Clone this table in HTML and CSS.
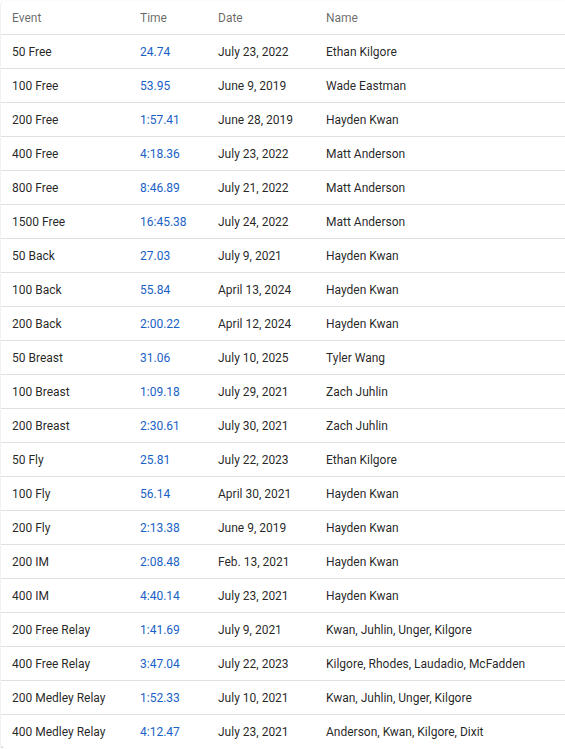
FILE: index.html
```html
<!DOCTYPE html>
<html>
<head>
<meta charset="utf-8">
<link rel="stylesheet" href="styles.css">
</head>
<body>
<div class="card">
<table class="records">
<thead>
<tr><th class="c-event">Event</th><th class="c-time">Time</th><th class="c-date">Date</th><th class="c-name">Name</th></tr>
</thead>
<tbody>
<tr><td>50 Free</td><td class="time">24.74</td><td>July 23, 2022</td><td>Ethan Kilgore</td></tr>
<tr><td>100 Free</td><td class="time">53.95</td><td>June 9, 2019</td><td>Wade Eastman</td></tr>
<tr><td>200 Free</td><td class="time">1:57.41</td><td>June 28, 2019</td><td>Hayden Kwan</td></tr>
<tr><td>400 Free</td><td class="time">4:18.36</td><td>July 23, 2022</td><td>Matt Anderson</td></tr>
<tr><td>800 Free</td><td class="time">8:46.89</td><td>July 21, 2022</td><td>Matt Anderson</td></tr>
<tr><td>1500 Free</td><td class="time">16:45.38</td><td>July 24, 2022</td><td>Matt Anderson</td></tr>
<tr><td>50 Back</td><td class="time">27.03</td><td>July 9, 2021</td><td>Hayden Kwan</td></tr>
<tr><td>100 Back</td><td class="time">55.84</td><td>April 13, 2024</td><td>Hayden Kwan</td></tr>
<tr><td>200 Back</td><td class="time">2:00.22</td><td>April 12, 2024</td><td>Hayden Kwan</td></tr>
<tr><td>50 Breast</td><td class="time">31.06</td><td>July 10, 2025</td><td>Tyler Wang</td></tr>
<tr><td>100 Breast</td><td class="time">1:09.18</td><td>July 29, 2021</td><td>Zach Juhlin</td></tr>
<tr><td>200 Breast</td><td class="time">2:30.61</td><td>July 30, 2021</td><td>Zach Juhlin</td></tr>
<tr><td>50 Fly</td><td class="time">25.81</td><td>July 22, 2023</td><td>Ethan Kilgore</td></tr>
<tr><td>100 Fly</td><td class="time">56.14</td><td>April 30, 2021</td><td>Hayden Kwan</td></tr>
<tr><td>200 Fly</td><td class="time">2:13.38</td><td>June 9, 2019</td><td>Hayden Kwan</td></tr>
<tr><td>200 IM</td><td class="time">2:08.48</td><td>Feb. 13, 2021</td><td>Hayden Kwan</td></tr>
<tr><td>400 IM</td><td class="time">4:40.14</td><td>July 23, 2021</td><td>Hayden Kwan</td></tr>
<tr><td>200 Free Relay</td><td class="time">1:41.69</td><td>July 9, 2021</td><td>Kwan, Juhlin, Unger, Kilgore</td></tr>
<tr><td>400 Free Relay</td><td class="time">3:47.04</td><td>July 22, 2023</td><td>Kilgore, Rhodes, Laudadio, McFadden</td></tr>
<tr><td>200 Medley Relay</td><td class="time">1:52.33</td><td>July 10, 2021</td><td>Kwan, Juhlin, Unger, Kilgore</td></tr>
<tr><td>400 Medley Relay</td><td class="time">4:12.47</td><td>July 23, 2021</td><td>Anderson, Kwan, Kilgore, Dixit</td></tr>
</tbody>
</table>
</div>
</body>
</html>
```

FILE: styles.css
```css
html, body {
  margin: 0;
  padding: 0;
  background: #ffffff;
}
body {
  font-family: Roboto, "Liberation Sans", sans-serif;
  font-size: 12px;
  color: rgba(0, 0, 0, 0.87);
}
.card {
  margin: 1px 0 0 1px;
  width: calc(100% - 1px);
  background: #fff;
  border-radius: 4px 0 0 4px;
  box-shadow: 0 2px 1px -1px rgba(0,0,0,0.2), 0 1px 1px 0 rgba(0,0,0,0.14), 0 1px 3px 0 rgba(0,0,0,0.12);
  clip-path: inset(-5px 0 -5px -5px);
  overflow: hidden;
}
.records {
  width: 100%;
  border-collapse: collapse;
  table-layout: fixed;
}
.records th,
.records td {
  height: 33px;
  padding: 0 0 0 11px;
  text-align: left;
  vertical-align: middle;
  border-bottom: 1px solid #e0e0e0;
  white-space: nowrap;
  line-height: 1;
}
.records tbody tr:last-child td {
  border-bottom: none;
}
.records th {
  font-weight: 400;
  color: rgba(0, 0, 0, 0.6);
}
.c-event { width: 117px; }
.c-time { width: 67px; }
.c-date { width: 97px; }
.records td.time {
  color: #1a62c6;
}
```
